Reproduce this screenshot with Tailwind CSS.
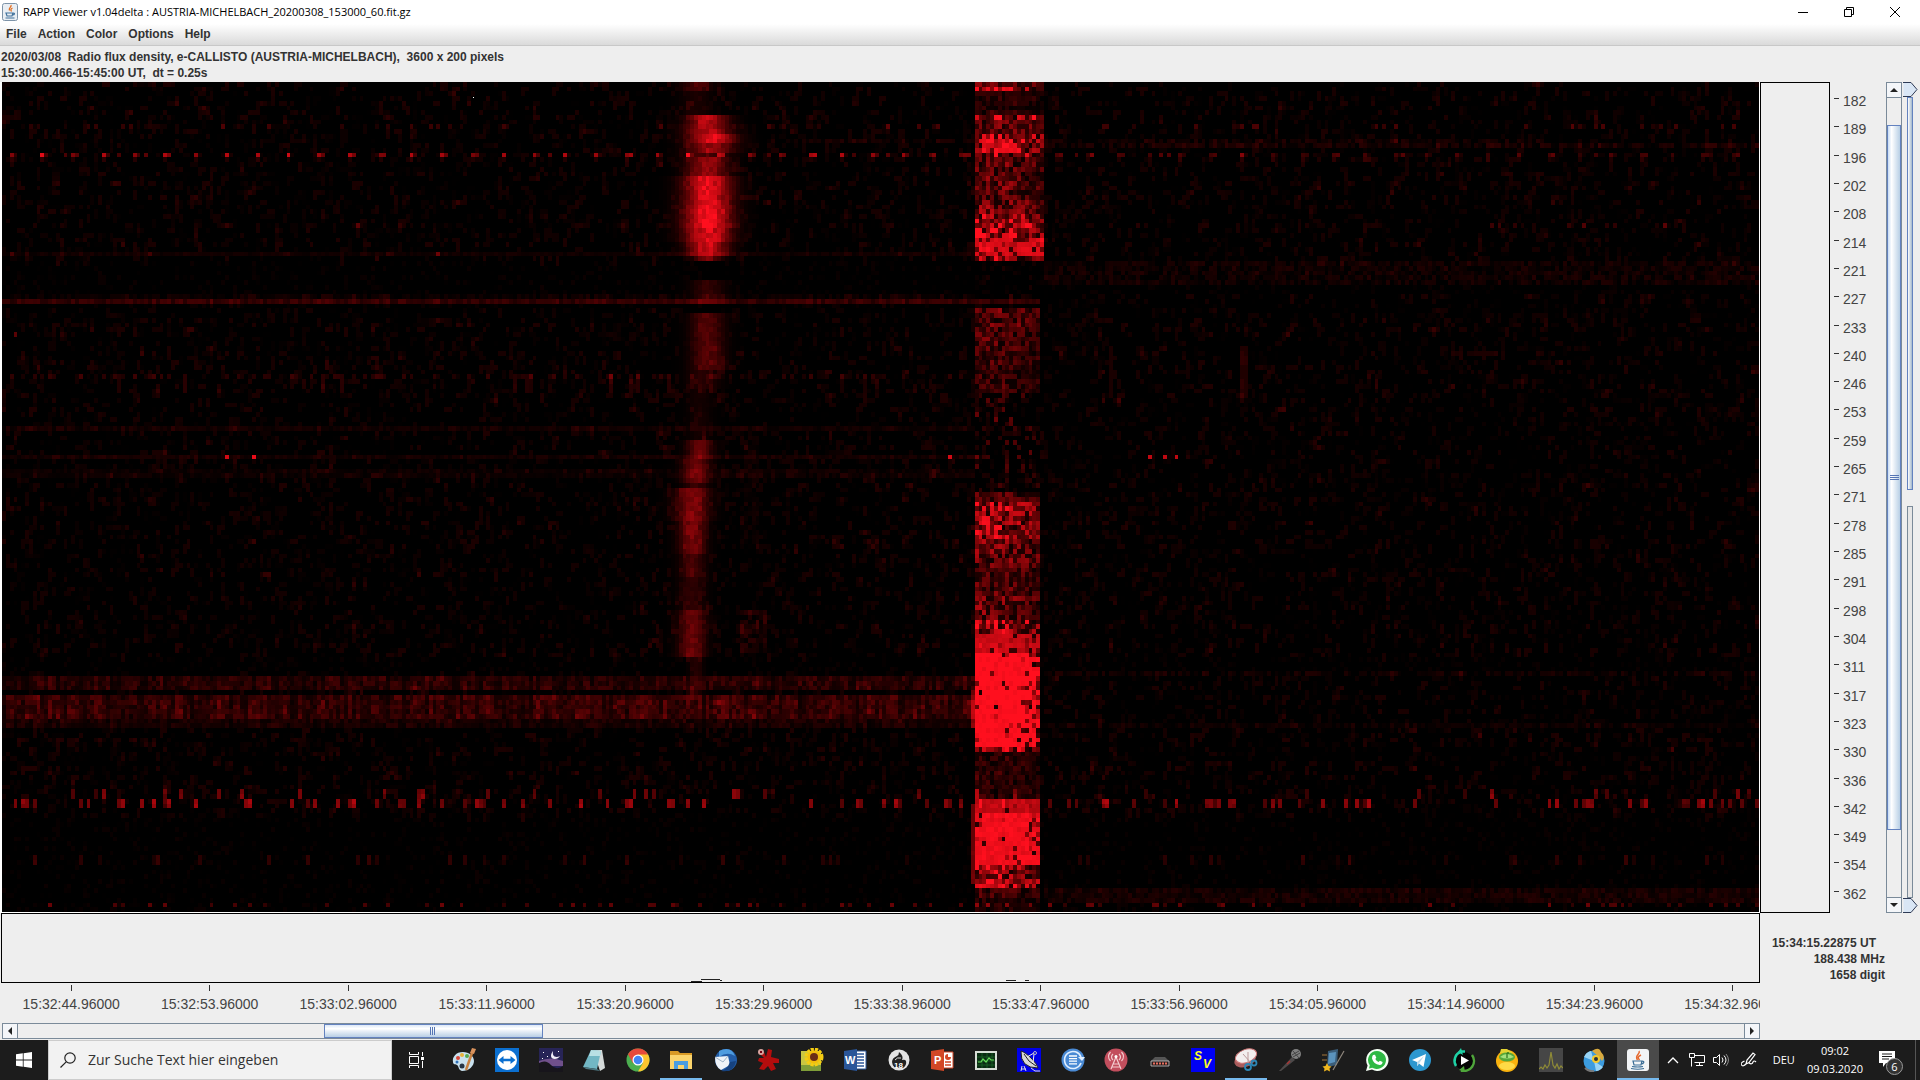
<!doctype html>
<html lang="de">

<head>
    <meta charset="UTF-8">
    <meta name="viewport" content="width=device-width, initial-scale=1.0">
    <title>RAPP Viewer</title>
    <script src="https://cdn.jsdelivr.net/npm/@tailwindcss/browser@4"></script>
</head>

<body class="h-screen flex flex-col overflow-hidden bg-[#eeeeee] text-[#333333] font-['Liberation_Sans',Arial,sans-serif]">

<!-- title bar -->
<header class="h-6 shrink-0 flex items-center bg-white text-black">
    <svg class="w-4 h-5 ml-[2px] mr-[5px]" viewBox="0 0 16 20">
        <rect x=".5" y="1.5" width="15" height="17" rx="2" fill="#e9eef3" stroke="#7d93a8"/>
        <path d="M9 3c1 2-3 3-1.500 5.500M10.500 6c-2 1-2 2-1 3.500" fill="none" stroke="#e26b1c" stroke-width="1.300"/>
        <path d="M4 11h7l-1 3H5zM11 11c2 0 2 2-.5 2M3.500 16h9" fill="none" stroke="#40719b" stroke-width="1.200"/>
    </svg>
    <h1 class="text-[11px] whitespace-nowrap font-['Open_Sans','Noto_Sans',sans-serif]">RAPP Viewer v1.04delta : AUSTRIA-MICHELBACH_20200308_153000_60.fit.gz</h1>
    <div class="ml-auto mr-[2px] flex items-center h-full">
        <button class="w-[46px] h-5 flex items-center justify-center" aria-label="Minimize">
            <svg class="w-[10px] h-[10px]" viewBox="0 0 10 10"><path d="M0 5.500h10" stroke="#000"/></svg>
        </button>
        <button class="w-[46px] h-5 flex items-center justify-center" aria-label="Restore">
            <svg class="w-[10px] h-[10px]" viewBox="0 0 10 10" fill="none" stroke="#000"><path d="M.5 2.500h7v7h-7zM2.500 2.500v-2h7v7h-2"/></svg>
        </button>
        <button class="w-[46px] h-5 flex items-center justify-center" aria-label="Close">
            <svg class="w-[10px] h-[10px]" viewBox="0 0 10 10" stroke="#000"><path d="M0 0l10 10M10 0L0 10"/></svg>
        </button>
    </div>
</header>

<!-- menu -->
<nav class="h-[22px] shrink-0 flex items-center gap-[11px] pl-[6px] pb-[2px] border-b border-[#c8c8c8] bg-linear-to-b from-white to-[#dadada] text-xs font-bold">
    <button>File</button>
    <button>Action</button>
    <button>Color</button>
    <button>Options</button>
    <button>Help</button>
</nav>

<section class="shrink-0 pt-[3px] pb-px pl-px text-xs leading-4 font-bold">
    <p class="whitespace-pre">2020/03/08  Radio flux density, e-CALLISTO (AUSTRIA-MICHELBACH),  3600 x 200 pixels</p>
    <p class="whitespace-pre">15:30:00.466-15:45:00 UT,  dt = 0.25s</p>
</section>

<main class="flex-1 min-h-0 grid grid-cols-[minmax(0,1fr)_70px_56px_16px_18px] grid-rows-[minmax(0,1fr)_70px_40px_17px]">
    <!-- spectrogram -->
    <div class="relative min-h-0 pl-[2px] pr-px pb-px bg-white">
        <canvas id="spectrum" width="457" height="176" class="block w-full h-full [image-rendering:pixelated]"></canvas>
        <span class="absolute left-[473px] top-[15px] w-px h-px bg-white"></span>
    </div>
    <div class="border border-black"></div>
    <ul id="freqAxis" class="flex flex-col justify-between py-[9px] pl-1 text-sm leading-5 text-[#444444]"></ul>

    <!-- vertical scroll bar -->
    <div class="flex flex-col border border-[#7a8a99]">
        <button class="h-[15px] shrink-0 flex items-center justify-center border-b border-[#7a8a99] bg-[#f4f6f9]" aria-label="Scroll up">
            <svg class="w-2 h-1" viewBox="0 0 8 4"><path d="M4 0l4 4H0z" fill="#222"/></svg>
        </button>
        <div class="h-[27px] shrink-0"></div>
        <div class="flex-1 flex items-center justify-center border border-[#6382bf] bg-linear-to-r from-[#c8dcf4] via-white via-30% to-[#b8cfe5]">
            <svg class="w-[9px] h-[6px]" viewBox="0 0 9 6"><path d="M0 .5h9M0 2.500h9M0 4.500h9" stroke="#5576b5"/></svg>
        </div>
        <div class="h-[67px] shrink-0"></div>
        <button class="h-[15px] shrink-0 flex items-center justify-center border-t border-[#7a8a99] bg-[#f4f6f9]" aria-label="Scroll down">
            <svg class="w-2 h-1" viewBox="0 0 8 4"><path d="M4 4l4-4H0z" fill="#222"/></svg>
        </button>
    </div>

    <!-- contrast sliders -->
    <div class="flex flex-col">
        <label class="relative flex-1 flex flex-col">
            <svg class="w-4 h-[15px] shrink-0" viewBox="0 0 16 15"><path d="M1.500.5h7l6.500 7-6.500 7h-7z" fill="#d9e6f5"/><path d="M1 .5h8l6 7-6 7H1" fill="none" stroke="#2d3a55"/></svg>
            <span class="flex-1 w-[6px] ml-[5px] mb-2 border border-[#6382bf] bg-linear-to-r from-white to-[#a3b8cc]"></span>
            <input type="range" value="100" aria-label="Upper level" class="absolute inset-0 w-4 h-full opacity-0 [writing-mode:vertical-lr]">
        </label>
        <label class="relative flex-1 flex flex-col">
            <span class="flex-1 w-[6px] ml-[5px] mt-2 border border-[#7a8a99] bg-[#e6e6e6]"></span>
            <svg class="w-4 h-[15px] shrink-0" viewBox="0 0 16 15"><path d="M1.500.5h7l6.500 7-6.500 7h-7z" fill="#d9e6f5"/><path d="M1 .5h8l6 7-6 7H1" fill="none" stroke="#2d3a55"/></svg>
            <input type="range" value="0" aria-label="Lower level" class="absolute inset-0 w-4 h-full opacity-0 [writing-mode:vertical-lr]">
        </label>
    </div>

    <!-- light curve -->
    <div class="ml-px flex items-end border border-black">
        <svg class="w-8 h-[3px] ml-[39.200%]" viewBox="0 0 32 3" stroke="#222"><path d="M0 2.500h11M10 .5h19M29 1.500h2"/></svg>
        <svg class="w-6 h-[3px] ml-[16.100%]" viewBox="0 0 24 3" stroke="#222"><path d="M0 1.500h10M19 1.500h4"/></svg>
    </div>
    <div class="col-span-4 pt-[22px] pr-[35px] text-xs leading-4 font-bold text-right">
        <p class="pr-[9px]">15:34:15.22875 UT</p>
        <p>188.438 MHz</p>
        <p>1658 digit</p>
    </div>

    <div class="col-start-1 ml-[2px] overflow-hidden">
        <ul id="timeAxis" class="w-[102.400%] grid grid-cols-13 text-sm leading-5 text-[#444444]"></ul>
    </div>

    <!-- horizontal scroll bar -->
    <div class="col-start-1 ml-[2px] mb-px flex border border-[#7a8a99]">
        <button class="w-[15px] shrink-0 flex items-center justify-center border-r border-[#7a8a99] bg-[#f4f6f9]" aria-label="Scroll left">
            <svg class="w-1 h-2" viewBox="0 0 4 8"><path d="M0 4l4-4v8z" fill="#222"/></svg>
        </button>
        <div class="w-[17.400%]"></div>
        <div class="w-[12.500%] flex items-center justify-center border border-[#6382bf] bg-linear-to-b from-[#dce8f7] via-white via-30% to-[#b8cfe5]">
            <svg class="w-[6px] h-2" viewBox="0 0 6 8"><path d="M.5 0v8M2.500 0v8M4.500 0v8" stroke="#5576b5"/></svg>
        </div>
        <button class="w-[15px] ml-auto shrink-0 flex items-center justify-center border-l border-[#7a8a99] bg-[#f4f6f9]" aria-label="Scroll right">
            <svg class="w-1 h-2" viewBox="0 0 4 8"><path d="M4 4L0 0v8z" fill="#222"/></svg>
        </button>
    </div>
</main>

<!-- taskbar -->
<footer class="h-10 shrink-0 flex items-stretch bg-[#1c1c1c] text-white font-['Open_Sans','Noto_Sans',sans-serif]">
    <button class="w-12 flex items-center justify-center" aria-label="Start">
        <svg class="w-4 h-4" viewBox="0 0 16 16" fill="#fff"><path d="M0 2.300L6.800 1.300v6.300H0zM7.600 1.200L16 0v7.600H7.600zM0 8.400h6.800v6.300L0 13.700zM7.600 8.400H16V16l-8.400-1.200z"/></svg>
    </button>
    <label class="w-[344px] flex items-center border border-[#cccccc] bg-[#f2f2f2]">
        <svg class="w-4 h-4 ml-[11px]" viewBox="0 0 16 16" fill="none" stroke="#222" stroke-width="1.200"><circle cx="10" cy="6" r="5.200"/><path d="M6.200 9.800L.5 15.500"/></svg>
        <input type="text" aria-label="Suche" placeholder="Zur Suche Text hier eingeben" class="ml-3 flex-1 min-w-0 text-sm outline-none placeholder:text-[#333333]">
    </label>
    <button class="w-12 flex items-center justify-center" aria-label="Task view">
        <svg class="w-4 h-4" viewBox="0 0 16 16" fill="none" stroke="#fff"><path d="M1.500 4.500h9v7h-9zM1.500 0v2.500h9V0M1.500 16v-2.500h9V16M14.500 0v4M14.500 9v7"/><path d="M13 5h3v3h-3z" fill="#fff" stroke="none"/></svg>
    </button>

    <div class="flex-1 flex justify-between pl-[3px] mr-2 *:w-[42px] *:flex *:items-center *:justify-center">
        <button aria-label="Paint"><svg class="w-6 h-6" viewBox="0 0 24 24"><path d="M11 4C4 4 0 9 1 14c0 3 3 2 4 3 2 1 1 5 5 6 7 0 12-5 12-10S17 4 11 4z" fill="#c9e1ee"/><circle cx="6" cy="10" r="2" fill="#d8473a"/><circle cx="10" cy="7" r="2" fill="#e8b23a"/><circle cx="15" cy="8" r="2" fill="#54a84f"/><circle cx="5" cy="14" r="1.500" fill="#2f70b8"/><circle cx="10" cy="18" r="2.500" fill="#273545"/><path d="M14 22l6-17" stroke="#c88242" stroke-width="2.500"/><path d="M18 5l2-5 4 1-2 5z" fill="#d9925c"/></svg></button>
        <button aria-label="TeamViewer"><svg class="w-6 h-6" viewBox="0 0 24 24"><path fill="#0b6fd0" d="M0 0h24v24H0z"/><circle cx="12" cy="12" r="10" fill="#fff"/><path d="M3.500 12L8.500 8v2.700h7V8l5 4-5 4v-2.700h-7V16z" fill="#0b6fd0"/></svg></button>
        <button aria-label="Stellarium"><svg class="w-6 h-6" viewBox="0 0 24 24"><path fill="#272457" d="M0 0h24v24H0z"/><path d="M0 13q12-5 24 0v5H0z" fill="#70508b"/><path d="M0 15q7-4 12 2t12 1v6H0z" fill="#17151b"/><path d="M14 3c-1 6 3 7 7 5-2 4-9 4-9 0 0-2 1-4 2-5z" fill="#f2effa"/><path d="M4 4h1v1H4zM8 8h1v1H8zM19 3h1v1h-1zM3 10h1v1H3z" fill="#fff"/></svg></button>
        <button aria-label="Notepad"><svg class="w-6 h-6" viewBox="0 0 24 24"><path d="M11 2h9l3 18-5 3z" fill="#d5dad9"/><path d="M9 2l10 1-4 18-14-2z" fill="#72b7c4"/><path d="M9 2l10 1-1 5L7 8z" fill="#b9e0e4"/><path d="M1 19l14 2 3 2-14-2z" fill="#4d7882"/></svg></button>
        <button aria-label="Chrome"><svg class="w-6 h-6" viewBox="0 0 24 24"><circle cx="12" cy="12" r="11.500" fill="#4caf50"/><path d="M12 12L2 6.300A11.500 11.500 0 0 1 22 6.300z" fill="#e64a3b"/><path d="M12 6.500h10.100A11.500 11.500 0 0 1 12 23.500l5-8.500z" fill="#fbc62f"/><path d="M2 6.300h10v6l-5 3z" fill="#e64a3b"/><circle cx="12" cy="12" r="5.500" fill="#fff"/><circle cx="12" cy="12" r="4.300" fill="#4285f4"/></svg></button>
        <button aria-label="Explorer" class="border-b-2 border-[#76b9ed] pt-[2px]"><svg class="w-6 h-6" viewBox="0 0 24 24"><path d="M1 3h8l2 2h12v6H1z" fill="#d99a25"/><path d="M1 7h22v14H1z" fill="#fbd46c"/><path d="M5 13h14v8h-4v-4H9v4H5z" fill="#4a9de0"/></svg></button>
        <button aria-label="Thunderbird"><svg class="w-6 h-6" viewBox="0 0 24 24"><circle cx="13" cy="12" r="11" fill="#235da7"/><path d="M6 3q12-6 16 5-8-5-16 1z" fill="#4e9cdf"/><path d="M2 9l13-1 2 9-9 5q-6-3-6-13z" fill="#eef3f8"/><path d="M2 9l8 5 5-6" fill="none" stroke="#9fb4c8"/><path d="M17 14q-3 8-9 9 13 2 15-10z" fill="#16427f"/></svg></button>
        <button aria-label="IrfanView"><svg class="w-6 h-6" viewBox="0 0 24 24"><path d="M2 4l6 0 2 5 2-8 4 1-1 7 8 2v4l-6 0 3 6-5 2-3-5-4 4-5-1 4-6-5-2 1-3 5 0z" fill="#b30d0d"/><circle cx="5" cy="4" r="3" fill="#d7a4a0"/><path d="M4 3h2v2H4z" fill="#701"/></svg></button>
        <button aria-label="Sunflower"><svg class="w-6 h-6" viewBox="0 0 24 24"><path d="M1 3h20v20H1z" fill="#c9c642"/><path d="M1 17h20v6H1z" fill="#7f9d38"/><circle cx="14" cy="9" r="7.500" fill="none" stroke="#f5cd12" stroke-width="4" stroke-dasharray="3 1"/><circle cx="14" cy="9" r="6.500" fill="#f2bf0d"/><circle cx="14" cy="9" r="4" fill="#6a2e16"/></svg></button>
        <button aria-label="Word"><svg class="w-6 h-6" viewBox="0 0 24 24"><path d="M13 3h10v18H13z" fill="#fff" stroke="#2a5699"/><path d="M14 6h7M14 9h7M14 12h7M14 15h7M14 18h7" stroke="#2a5699" stroke-width="1.400"/><path d="M1 3l13-2v22L1 21z" fill="#2a5699"/><text x="2" y="16" font-size="11" font-weight="700" fill="#fff" font-family="Liberation Sans, sans-serif">W</text></svg></button>
        <button aria-label="Nero 18"><svg class="w-6 h-6" viewBox="0 0 24 24"><circle cx="12" cy="12" r="10.500" fill="#e4e4e4"/><path d="M5 14q0-4 5-6 2-1 2-4 5 4 3 8 3-1 4 1 1 4-3 7H8q-3-3-3-6z" fill="#222"/><path d="M8 12q2-3 6-2" stroke="#ddd" fill="none"/><text x="7" y="20" font-size="8" font-weight="700" fill="#fff" font-family="Liberation Sans, sans-serif">18</text></svg></button>
        <button aria-label="PowerPoint"><svg class="w-6 h-6" viewBox="0 0 24 24"><path d="M13 4h10v16H13z" fill="#fff" stroke="#d24726"/><path d="M15 14h6M15 17h6" stroke="#d24726" stroke-width="1.500"/><path d="M18 6v3h3a3 3 0 1 1-3-3z" fill="#d24726"/><path d="M1 3l13-2v22L1 21z" fill="#d24726"/><text x="4" y="16" font-size="11" font-weight="700" fill="#fff" font-family="Liberation Sans, sans-serif">P</text></svg></button>
        <button aria-label="Monitor"><svg class="w-6 h-6" viewBox="0 0 24 24"><path d="M2 4h20v17H2z" fill="#0a2c12" stroke="#d7ddd5" stroke-width="2"/><path d="M3 9h18M3 13h18M3 17h18M8 5v15M13 5v15M18 5v15" stroke="#1e6a2b" stroke-width=".7"/><path d="M4 14h3l2-3 3 3 3-4 2 2h3" fill="none" stroke="#66dd5a" stroke-width="1.200"/></svg></button>
        <button aria-label="Dish"><svg class="w-6 h-6" viewBox="0 0 24 24"><path fill="#0000e8" d="M0 0h24v24H0z"/><path d="M4 3q4 1 11 8 5 5 6 9Q3 20 4 3z" fill="#d8d8d8" stroke="#222"/><path d="M7 6q4 8 12 12" fill="none" stroke="#222"/><path d="M10 9l7-4M16 15l1-9" stroke="#eee"/><circle cx="18" cy="5" r="1.500" fill="none" stroke="#bbb"/><path d="M5 18l-1 5M7 18l2 5M4 21h5M14 20l4 3h5" stroke="#ddd" fill="none"/></svg></button>
        <button aria-label="Sync"><svg class="w-6 h-6" viewBox="0 0 24 24"><circle cx="12" cy="12" r="11.500" fill="#4a8ad4"/><path d="M20 9A8.500 8.500 0 1 0 20 15" fill="none" stroke="#e1efff" stroke-width="1.600"/><path d="M17 9h7l-3 4z" fill="#e1efff"/><path d="M8 8h8M8 10.600h8M8 13.200h8M8 15.800h8" stroke="#fff" stroke-width="1.300"/></svg></button>
        <button aria-label="Antenna"><svg class="w-6 h-6" viewBox="0 0 24 24"><circle cx="12" cy="12" r="11.500" fill="#c24e5d"/><path d="M12 9L7 21M12 9l5 12M9 16h6M8 19h8M9 12q-3-3 0-6M15 12q3-3 0-6M6.500 13q-4-4.500 0-9M17.500 13q4-4.500 0-9" fill="none" stroke="#f3cccf" stroke-width="1.200"/><circle cx="12" cy="8.500" r="1.500" fill="#fff"/></svg></button>
        <button aria-label="Receiver"><svg class="w-6 h-6" viewBox="0 0 24 24"><path d="M7 9h10l4 4H3z" fill="#555"/><path d="M3 13h18v5H3z" fill="#281b1b" stroke="#ccc" stroke-width=".8"/><path d="M5 15.500h14" stroke="#e8705f" stroke-width="2" stroke-dasharray="2 1"/></svg></button>
        <button aria-label="SV"><svg class="w-6 h-6" viewBox="0 0 24 24"><path fill="#0000f4" d="M0 0h24v24H0z"/><g fill="#ffff20" font-size="12" font-weight="700" font-style="italic" font-family="Liberation Sans, sans-serif"><text x="3" y="12">S</text><text x="12" y="20">V</text></g></svg></button>
        <button aria-label="Snipping Tool" class="border-b-2 border-[#76b9ed] pt-[2px]"><svg class="w-6 h-6" viewBox="0 0 24 24"><ellipse cx="11" cy="12" rx="11" ry="7" fill="#aa5c5c" transform="rotate(-20 11 12)"/><ellipse cx="12" cy="8" rx="11" ry="6.500" fill="#f2eeee" stroke="#cf7979" transform="rotate(-20 12 8)"/><path d="M9 6l8 9M14 4v11" stroke="#b99" fill="none"/><circle cx="14" cy="19" r="3" fill="none" stroke="#2d86b5" stroke-width="1.800"/><circle cx="20" cy="15" r="2.500" fill="none" stroke="#2d86b5" stroke-width="1.800"/></svg></button>
        <button aria-label="Recorder"><svg class="w-6 h-6" viewBox="0 0 24 24"><path d="M1 23L14 9l3 3L3 23z" fill="#4c4949"/><path d="M9 16l3-3" stroke="#a33" stroke-width="1.500"/><circle cx="18" cy="6" r="5" fill="#808080"/><path d="M14 7l7-4M15 9l7-4M15 3l6 7" stroke="#444"/></svg></button>
        <button aria-label="Audio editor"><svg class="w-6 h-6" viewBox="0 0 24 24"><path d="M7 3l10-2-1 16-10 2z" fill="#3b5d79"/><path d="M8 5l7-1-1 10-7 2z" fill="#5b93bd"/><path d="M23 3L12 22" stroke="#8f877d" stroke-width="1.200"/><path d="M6 15l1.500 3 3 .5-2 2 .5 3-3-1.500-3 1.500.5-3-2-2 3-.5z" fill="#f2b81e"/><path d="M1 7h5M1 12h5" stroke="#a4763a"/></svg></button>
        <button aria-label="WhatsApp"><svg class="w-6 h-6" viewBox="0 0 24 24"><path d="M12 1a11 11 0 1 1-5 20.500L1 23l1.600-5.500A11 11 0 0 1 12 1z" fill="#f4fff4"/><path d="M12 3a9 9 0 1 1-4.700 16.700L4 20.500l.8-3.200A9 9 0 0 1 12 3z" fill="#2fb944"/><path d="M8 7l2-.3 1.300 3-1 1.300q1 2 3.200 3l1.400-1.300 2.700 1.300q-.2 3-3 3Q8.500 16 7 10.500 7 8 8 7z" fill="#fff"/></svg></button>
        <button aria-label="Telegram"><svg class="w-6 h-6" viewBox="0 0 24 24"><circle cx="12" cy="12" r="11" fill="#2c97cf"/><path d="M4 12l14-6-2.500 13-4.500-3.500L9 18v-4z" fill="#fff"/><path d="M9 14l7-6-5 7.500L9 18z" fill="#b9d8ea"/></svg></button>
        <button aria-label="Player"><svg class="w-6 h-6" viewBox="0 0 24 24"><circle cx="12" cy="13" r="9" fill="#050505"/><path d="M4 18A10 10 0 0 1 9 3.500h4" fill="none" stroke="#1fd1a5" stroke-width="2.500"/><path d="M9 0l-3 4 5 3z" fill="#1fd1a5"/><path d="M20 7a10 10 0 0 1-11 15.500" fill="none" stroke="#4fa63b" stroke-width="2.500"/><path d="M12 18l-5 4 6 2z" fill="#4fa63b"/><path d="M9 8l8 4.500L9 17z" fill="#fff"/></svg></button>
        <button aria-label="Music"><svg class="w-6 h-6" viewBox="0 0 24 24"><circle cx="12" cy="13" r="11" fill="#f9b20e"/><path d="M6 1h6l6 4H5z" fill="#e3d232"/><ellipse cx="12" cy="9" rx="8" ry="4.500" fill="#55a83a"/><path d="M5 9q7-6 14 0-7 3-14 0z" fill="#a5e07c"/><path d="M12 5v5M12 5h2" stroke="#347a22" stroke-width="1.300"/><ellipse cx="12" cy="18" rx="8" ry="4" fill="#ffda46"/></svg></button>
        <button aria-label="Spectrum"><svg class="w-6 h-6" viewBox="0 0 24 24"><path fill="#464646" d="M0 0h24v24H0z"/><path d="M0 21l2-2 2 2 2-4 2 3 2-3 2-13 2 13 2 3 2-4 2 5 2-3 2 2" fill="none" stroke="#8f8b37" stroke-width="1.200"/></svg></button>
        <button aria-label="Disc"><svg class="w-6 h-6" viewBox="0 0 24 24"><circle cx="12" cy="13" r="10.500" fill="#3c9cdf"/><path d="M12 13L2 9q2-5 7-6zM12 13l9 6q-3 4-7 4z" fill="#99d5f6"/><path d="M10 3q7-5 9 1 5 5 1 9l-4-5z" fill="#d9aa3e"/><circle cx="14" cy="11" r="4" fill="#f3c92c"/><circle cx="14" cy="11" r="2" fill="#27323c"/><path d="M3 20q4 4 9 3" stroke="#777" stroke-width="2" fill="none"/></svg></button>
        <button aria-label="Java" class="border-b-2 border-[#76b9ed] pt-[2px] bg-[#4a4a4a]"><svg class="w-6 h-6" viewBox="0 0 24 24"><rect x="1" y="1" width="22" height="22" rx="3" fill="#f2f4f6"/><path d="M13 3c2 3-5 4-1.500 9M15 7c-4 2-3 3-1.500 5" fill="none" stroke="#e5692f" stroke-width="1.500"/><path d="M7 13h9l-1 4H8zM16 13c3 0 2 3-1 3M6 18.500q6 1 11 0M5 20.500q7 1.500 13 0" fill="none" stroke="#3a6d96" stroke-width="1.200"/></svg></button>
    </div>

    <!-- tray -->
    <div class="flex items-center text-[11px]">
        <button aria-label="Hidden icons" class="w-[14px]"><svg class="w-3 h-2" viewBox="0 0 12 8"><path d="M1 7l5-5 5 5" fill="none" stroke="#fff" stroke-width="1.300"/></svg></button>
        <button aria-label="Network" class="ml-2"><svg class="w-4 h-4" viewBox="0 0 16 16" fill="none" stroke="#fff"><path d="M5.500 3.500h10v7h-10M10.500 10.500v3M7 13.500h7M.5 1.500h5v4h-5zM2.500 5.500v9"/></svg></button>
        <button aria-label="Volume" class="ml-2"><svg class="w-4 h-4" viewBox="0 0 16 16" fill="none" stroke="#fff"><path d="M.5 5.500h3l3-3v11l-3-3h-3zM9 5.500q2 2.500 0 5"/><path d="M11 3.500q4 4.500 0 9"/><path d="M13 2q5 6 0 12" stroke="#888"/></svg></button>
        <button aria-label="Ink" class="ml-3"><svg class="w-4 h-4" viewBox="0 0 16 16" fill="none" stroke="#fff" stroke-width="1.200"><path d="M5 12l1-4 6-7 2 1.500-6 8zM5 12q-3 3-4.500 1t3-4M8 11q3 2 4-1 1-2 3 0"/></svg></button>
        <button class="ml-4">DEU</button>
        <time class="ml-3 text-center leading-[18px]">09:02<br>09.03.2020</time>
        <button aria-label="Notifications" class="relative ml-4">
            <svg class="w-6 h-6" viewBox="0 0 24 24"><path d="M0 3h16v12H7l-3 4v-4H0z" fill="#fff"/><path d="M3 6h10M3 8.500h10M3 11h7" stroke="#1c1c1c"/></svg>
            <span class="absolute left-[7px] top-[10px] w-[17px] h-[17px] rounded-full border border-[#9a9a9a] bg-[#333333] text-[11px] leading-[15px] text-center">6</span>
        </button>
        <span class="self-stretch ml-3 mr-1 w-px bg-[#555555]"></span>
    </div>
</footer>
</body>
<script>
var freqs = [182, 189, 196, 202, 208, 214, 221, 227, 233, 240, 246, 253, 259, 265, 271, 278, 285, 291, 298, 304, 311, 317, 323, 330, 336, 342, 349, 354, 362]
var times = ['15:32:44', '15:32:53', '15:33:02', '15:33:11', '15:33:20', '15:33:29', '15:33:38', '15:33:47', '15:33:56', '15:34:05', '15:34:14', '15:34:23', '15:34:32']

document.getElementById('freqAxis').innerHTML = freqs.map(f =>
    `<li class="flex items-center gap-1"><span class="w-[5px] h-px mb-[5px] bg-[#333333]"></span>${f}</li>`).join('')
document.getElementById('timeAxis').innerHTML = times.map(t =>
    `<li class="flex flex-col items-center pt-[2px]"><span class="w-px h-[6px] mb-[3px] bg-[#333333]"></span>${t}.96000</li>`).join('')

// small seeded generator, so the noise is the same on every load
var seed = 1530
function rnd() {
    seed = (seed * 1664525 + 1013904223) >>> 0
    return seed / 4294967296
}

var W = 457, H = 176
var v = new Float32Array(W * H)
function add(x, y, a) {
    if (x >= 0 && x < W && y >= 0 && y < H) v[y * W + x] += a
}
function band(x0, x1, y0, y1, level, spread) {
    for (var y = y0; y <= y1; y++)
        for (var x = x0; x < x1; x++) add(x, y, level + (rnd() - 0.5) * spread)
}
// like band, but every column keeps a level of its own
function streaks(x0, x1, y0, y1, level) {
    for (var x = x0; x < x1; x++) {
        var a = level * (0.4 + rnd() * 1.1)
        for (var y = y0; y <= y1; y++) add(x, y, a * (0.5 + rnd()))
    }
}
function dots(x0, x1, y, chance, level, h) {
    for (var x = x0; x < x1; x++)
        if (rnd() < chance) {
            var a = level * (0.5 + rnd() * 0.7)
            for (var k = 0; k < h; k++) add(x, y + k, a)
        }
}

// background noise, row by row, some of it two rows high
for (var y = 0; y < H; y++) {
    var quiet = (y > 37 && y < 45) || y == 47 || (y > 121 && y < 125) || y > 155
    var amp = quiet ? 0.05 : 0.08 + rnd() * 0.05
    for (var x = 0; x < W; x++)
        if (rnd() < 0.2) {
            var a = rnd() * amp
            add(x, y, a)
            if (!quiet && rnd() < 0.35) add(x, y + 1, a)
            if (!quiet && rnd() < 0.25) add(x + 1, y, a)
        }
}

// horizontal lines and interference
band(0, 270, 46, 46, 0.19, 0.15)
band(0, 253, 45, 45, 0.03, 0.08)
band(0, 253, 36, 36, 0.06, 0.06)
band(0, 253, 73, 73, 0.06, 0.08)
band(0, 253, 79, 79, 0.07, 0.08)
band(0, 253, 82, 83, 0.04, 0.06)
streaks(0, 253, 126, 128, 0.14)
streaks(0, 253, 130, 134, 0.19)
streaks(0, 253, 135, 136, 0.08)
band(271, W, 38, 42, 0.05, 0.14)
band(271, W, 13, 13, 0.06, 0.15)
band(200, 400, 12, 12, 0.05, 0.15)
band(271, W, 171, 173, 0.08, 0.13)
band(271, W, 125, 125, 0.03, 0.18)
band(271, W, 136, 136, 0.04, 0.08)
dots(0, 253, 62, 0.3, 0.16, 1)
dots(0, 253, 62, 0.05, 0.14, 4)
dots(0, W, 9, 0.1, 0.25, 1)
dots(271, W, 30, 0.1, 0.2, 1)
dots(0, W, 36, 0.02, 0.3, 1)
dots(0, W, 164, 0.1, 0.18, 2)
dots(0, W, 174, 0.15, 0.35, 1)
dots(0, W, 150, 0.07, 0.4, 2)
dots(0, W, 152, 0.22, 0.5, 2)
for (var x = 2; x < W; x += 8) {
    var a = x < 271 ? 0.7 : 0.3
    add(x, 15, a * (0.6 + rnd() * 0.4))
    add(x + 1, 15, a * rnd())
    add(x, 16, 0.12)
}
dots(0, W, 15, 0.04, 0.3, 1);
[[58, 79], [65, 79], [246, 79], [298, 79], [302, 79], [305, 79], [432, 30], [92, 30], [3, 53]].forEach(p => add(p[0], p[1], p[1] == 79 ? 0.75 : 0.35))
for (var y = 56; y < 67; y++) {
    add(322, y, 0.12)
    add(323, y, 0.12)
    add(288, y, 0.1)
}

// first burst: first row, last row, centre, width, level
var burst = [
    [0, 1, 180, 5, 0.25], [2, 6, 180, 5, 0.1], [7, 8, 183, 6, 0.75], [9, 10, 183, 7, 0.65], [11, 12, 184, 7, 0.95],
    [13, 14, 184, 7, 0.6], [15, 15, 183, 8, 0.25], [16, 19, 183, 6, 0.6], [20, 25, 183, 7, 0.95], [26, 30, 183, 7, 1.05],
    [31, 33, 183, 7, 0.9], [34, 36, 183, 6, 0.8], [37, 37, 183, 4, 0.5], [42, 46, 183, 5, 0.2], [49, 60, 183, 5, 0.33],
    [61, 64, 182, 5, 0.16], [65, 75, 181, 4, 0.08], [76, 79, 181, 4, 0.38], [80, 84, 180, 4, 0.45], [85, 85, 180, 4, 0.2],
    [86, 92, 179, 5, 0.52], [93, 99, 179, 4, 0.48], [100, 104, 179, 4, 0.26], [105, 111, 179, 4, 0.18],
    [112, 121, 179, 4, 0.42], [122, 130, 180, 2, 0.16]
]
burst.forEach(b => {
    for (var y = b[0]; y <= b[1]; y++)
        for (var x = b[2] - 14; x < b[2] + 14; x++) {
            var d = (x - b[2]) / b[3]
            add(x, y, b[4] * Math.exp(-d * d * 1.5) * (0.8 + rnd() * 0.3))
        }
})
// faint echo right of it
band(192, 197, 73, 98, 0.03, 0.1)
band(192, 199, 112, 120, 0.08, 0.16)

// second burst: rows up to and including the given one have this level
var column = [
    [0, 0.3], [1, 0.7], [6, 0.12], [7, 0.65], [10, 0.3], [14, 0.6], [24, 0.3], [27, 0.38], [29, 0.55], [32, 0.7],
    [36, 0.9], [37, 0.5], [47, 0.02], [51, 0.3], [56, 0.24], [65, 0.18], [86, 0.07], [88, 0.25], [96, 0.5],
    [102, 0.36], [108, 0.25], [113, 0.35], [116, 0.62], [120, 0.8], [140, 1.05], [141, 0.6], [151, 0.14],
    [154, 0.75], [165, 0.98], [170, 0.6], [172, 0.2], [175, 0.12]
]
var i = 0
for (var y = 0; y < H; y++) {
    while (y > column[i][0]) i++
    var lv = column[i][1]
    for (var x = 253; x < (y < 40 ? 271 : 270); x++) {
        var side = x > 260 ? 1 - (x - 260) * 0.035 : 1
        if (lv > 0.7) {
            // almost saturated, with drop-outs towards the right
            var miss = (y < 40 ? 0.2 : 0.05) + (1 - side) * 1.2
            add(x, y, rnd() < miss ? 0.1 + rnd() * 0.7 : lv * (0.88 + rnd() * 0.15))
        } else if (lv < 0.1) {
            add(x, y, rnd() < 0.2 ? lv * rnd() * 5 : 0)
        } else {
            add(x, y, lv * side * (0.1 + rnd() * 1.9))
        }
    }
    if ((y > 128 && y < 137) || (y > 152 && y < 170)) add(252, y, 0.4)
}

var ctx = document.getElementById('spectrum').getContext('2d')
var img = ctx.createImageData(W, H)
for (var k = 0; k < W * H; k++) {
    var a = Math.max(0, Math.min(1, v[k]))
    img.data[k * 4] = a * 255
    img.data[k * 4 + 1] = a * a * 15
    img.data[k * 4 + 2] = a * a * 30
    img.data[k * 4 + 3] = 255
}
ctx.putImageData(img, 0, 0)
</script>

</html>
